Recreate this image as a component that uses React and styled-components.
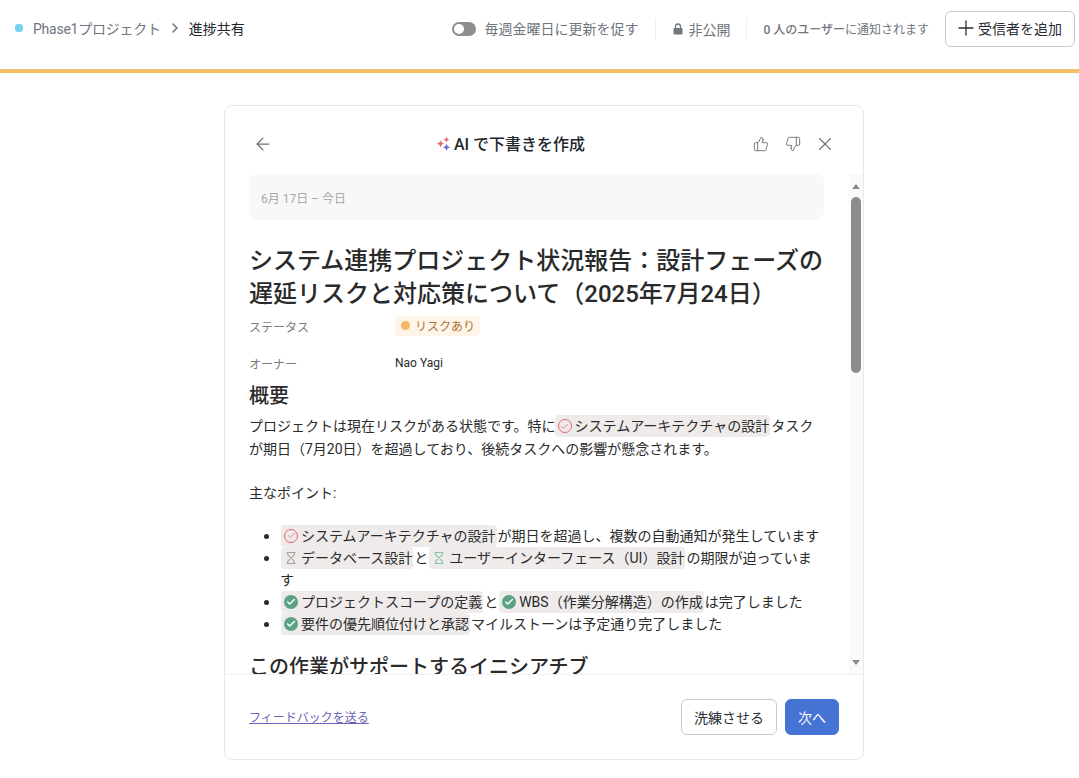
import React from "react";
import styled, { createGlobalStyle } from "styled-components";
import { ArrowLeft, ChevronRight, Plus, ThumbsDown, ThumbsUp, X, Check } from "lucide-react";

const GlobalStyle = createGlobalStyle`
  html, body {
    margin: 0;
    padding: 0;
    height: 100%;
    background: #fff;
    overflow: hidden;
    font-family: Roboto, "Noto Sans CJK JP", sans-serif;
    color: #2a2e34;
  }
  * { box-sizing: border-box; }
`;

const Page = styled.div`
  width: 1079px;
  height: 778px;
  display: flex;
  flex-direction: column;
`;

const TopBar = styled.header`
  height: 73px;
  flex: none;
  display: flex;
  align-items: center;
  justify-content: space-between;
  padding: 0 4px 12px 15px;
  border-bottom: 4px solid #f4bf69;
`;

const Crumbs = styled.div`
  display: flex;
  align-items: center;
  font-size: 14px;
  margin-top: -2px;
`;

const Dot = styled.span`
  width: 8px;
  height: 8px;
  border-radius: 3px;
  background: #76d6ee;
  margin-right: 10px;
`;

const CrumbLink = styled.span`
  color: #6f7680;
  letter-spacing: -0.25px;
`;

const CrumbCurrent = styled.span`
  color: #22262b;
  margin-left: 6px;
`;

const TopActions = styled.div`
  display: flex;
  align-items: center;
`;

const Toggle = styled.span`
  width: 24px;
  height: 14px;
  border-radius: 7px;
  background: #8f8d90;
  padding: 2px;
  margin-right: 8px;
  display: flex;
  &::before {
    content: "";
    width: 10px;
    height: 10px;
    border-radius: 50%;
    background: #fff;
  }
`;

const TopText = styled.span`
  font-size: 14px;
  color: #6f7680;
  margin-top: -2px;
`;

const Divider = styled.span`
  width: 1px;
  height: 22px;
  background: #eeeeee;
  margin: 0 ${(p) => p.$gap}px;
`;

const Privacy = styled.span`
  display: flex;
  align-items: center;
  gap: 5px;
  font-size: 14px;
  color: #6f7680;
`;

const NotifyText = styled.span`
  font-size: 12px;
  color: #6f7680;
  margin-right: 16px;
  b {
    font-weight: 500;
  }
`;

const AddButton = styled.button`
  height: 36px;
  width: 130px;
  border: 1px solid #c9c9c9;
  border-radius: 6px;
  background: #fff;
  font: inherit;
  font-size: 14px;
  color: #2a2e34;
  display: flex;
  align-items: center;
  justify-content: center;
  padding: 0 4px 2px 0;
`;

const Main = styled.main`
  flex: 1;
  display: flex;
  justify-content: center;
  padding: 32px 0 18px 9px;
  min-height: 0;
`;

const Card = styled.section`
  width: 640px;
  display: flex;
  flex-direction: column;
  border: 1px solid #e8e8e8;
  border-radius: 8px;
  background: #fff;
  overflow: hidden;
`;

const CardHead = styled.div`
  height: 68px;
  flex: none;
  display: flex;
  align-items: center;
  justify-content: space-between;
  padding: 8px 27px 0 28px;
`;

const IconBtn = styled.span`
  display: flex;
  color: #6c7077;
  margin-left: ${(p) => p.$shift || 0}px;
`;

const CardTitle = styled.h2`
  margin: -2px 0 0 -4px;
  display: flex;
  align-items: center;
  gap: 3px;
  font-size: 16px;
  font-weight: 500;
  color: #22262b;
`;

const HeadIcons = styled.div`
  display: flex;
  align-items: center;
  gap: 16px;
`;

const BodyWrap = styled.div`
  flex: 1;
  min-height: 0;
  display: flex;
  padding-left: 24px;
`;

const Scroller = styled.div`
  flex: 1;
  min-width: 0;
  overflow: hidden;
  padding-right: 25px;
`;

const DateBox = styled.div`
  height: 46px;
  background: #f8f8f8;
  border-radius: 8px;
  display: flex;
  align-items: center;
  padding-left: 12px;
  font-size: 12px;
  color: #a9a9a9;
`;

const Title = styled.h1`
  margin: 25px 0 4px;
  font-size: 24px;
  line-height: 33px;
  font-weight: 500;
  color: #2a2a2a;
`;

const MetaRow = styled.div`
  display: grid;
  grid-template-columns: 146px 1fr;
  align-items: center;
  height: 22px;
  margin-bottom: ${(p) => p.$after}px;
  font-size: 12px;
`;

const MetaLabel = styled.span`
  color: #7b7b7b;
`;

const MetaValue = styled.span`
  color: #2a2a2a;
`;

const Badge = styled.span`
  display: inline-flex;
  align-items: center;
  gap: 5px;
  height: 20px;
  width: 85px;
  padding-left: 6px;
  margin-top: -1px;
  border-radius: 4px;
  background: #fef5e8;
  color: #a87737;
  &::before {
    content: "";
    width: 9px;
    height: 9px;
    border-radius: 50%;
    background: #f4b968;
  }
`;

const Heading = styled.h3`
  margin: ${(p) => p.$top}px 0 ${(p) => p.$after}px;
  font-size: 20px;
  line-height: 27px;
  font-weight: 500;
  color: #2a2a2a;
`;

const Para = styled.p`
  margin: 0 0 ${(p) => p.$after}px;
  font-size: 14px;
  line-height: 22.5px;
  color: #2a2a2a;
`;

const List = styled.ul`
  margin: 0 0 19px;
  padding: 0 0 0 31px;
  font-size: 14px;
  line-height: 22px;
  color: #2a2a2a;
  li::marker {
    font-size: 15px;
  }
`;

const Chip = styled.span`
  display: inline-flex;
  align-items: center;
  height: 22px;
  padding: 0 1px 0 3px;
  margin: 0 1px 0 ${(p) => (p.$tight ? "-1px" : "1px")};
  border-radius: 4px;
  background: #eeebea;
  vertical-align: top;
  gap: 3px;
`;

const TaskDot = styled.span`
  width: 14px;
  height: 14px;
  flex: none;
  display: flex;
  align-items: center;
  justify-content: center;
  border-radius: 50%;
  color: ${(p) => (p.$kind === "late" ? "#e5636f" : "#fff")};
  border: ${(p) => (p.$kind === "late" ? "1px solid #e5636f" : "none")};
  background: ${(p) => (p.$kind === "done" ? "#5aa283" : "transparent")};
`;

const ScrollTrack = styled.div`
  width: 14px;
  flex: none;
  background: #fafafa;
  display: flex;
  flex-direction: column;
  align-items: center;
`;

const ScrollArrow = styled.span`
  width: 0;
  height: 0;
  flex: none;
  margin: ${(p) => (p.$up ? "10px 0 8px" : "auto 0 9px")};
  border-left: 4.5px solid transparent;
  border-right: 4.5px solid transparent;
  border-bottom: ${(p) => (p.$up ? "5px solid #8a8a8a" : "none")};
  border-top: ${(p) => (p.$up ? "none" : "5px solid #8a8a8a")};
`;

const ScrollThumb = styled.span`
  width: 10px;
  height: 176px;
  flex: none;
  border-radius: 5px;
  background: #8c8c8c;
`;

const CardFoot = styled.div`
  height: 85px;
  flex: none;
  border-top: 1px solid #f1f1f1;
  display: flex;
  align-items: center;
  justify-content: space-between;
  padding: 0 24px;
`;

const FeedbackLink = styled.a`
  font-size: 12px;
  color: #6e62b6;
  text-decoration: underline;
  margin-bottom: 2px;
`;

const FootButtons = styled.div`
  display: flex;
  gap: 8px;
`;

const FootButton = styled.button`
  height: 36px;
  width: ${(p) => (p.$primary ? "54px" : "96px")};
  border-radius: 6px;
  border: 1px solid ${(p) => (p.$primary ? "#4674d4" : "#c9c9c9")};
  background: ${(p) => (p.$primary ? "#4674d4" : "#fff")};
  color: ${(p) => (p.$primary ? "#fff" : "#2a2e34")};
  font: inherit;
  font-size: 14px;
  padding: 0;
`;

function Sparkle() {
  return (
    <svg width="14" height="15" viewBox="0 0 14 15">
      <path d="M3.500 4.200l1.100 2.400 2.400 1.100-2.400 1.100-1.100 2.400-1.100-2.400-2.400-1.100 2.400-1.100z" fill="#ee5f6c" />
      <path d="M9.500 .8l.9 2 2 .9-2 .9-.9 2-.9-2-2-.9 2-.9z" fill="#f0616c" />
      <path d="M9.500 7.800l1.100 2.400 2.400 1.100-2.400 1.100-1.100 2.400-1.100-2.400-2.400-1.100 2.400-1.100z" fill="#6a6fd6" />
    </svg>
  );
}

function LockIcon() {
  return (
    <svg width="10" height="12" viewBox="0 0 10 12">
      <path d="M2.500 5V3.500a2.500 2.500 0 0 1 5 0V5" fill="none" stroke="#6f7680" strokeWidth="1.300" />
      <rect x="0.500" y="5" width="9" height="6.500" rx="1" fill="#6f7680" />
    </svg>
  );
}

function Glass({ color }) {
  return (
    <svg width="14" height="14" viewBox="0 0 14 14" style={{ flex: "none" }}>
      <path
        d="M2.500 1.500h9M2.500 12.500h9M3.800 1.500v2.300L10.200 10.200v2.300M10.200 1.500v2.300L3.800 10.200v2.300"
        fill="none"
        stroke={color}
        strokeWidth="1.200"
      />
    </svg>
  );
}

function TaskChip({ kind, tight, children }) {
  let icon;
  if (kind === "todo") {
    icon = <Glass color="#a3a3a3" />;
  } else if (kind === "progress") {
    icon = <Glass color="#86c4ab" />;
  } else {
    icon = (
      <TaskDot $kind={kind}>
        <Check size={kind === "late" ? 9 : 10} strokeWidth={kind === "late" ? 2 : 3.5} />
      </TaskDot>
    );
  }
  return (
    <Chip $tight={tight}>
      {icon}
      {children}
    </Chip>
  );
}

export default function App() {
  return (
    <Page>
      <GlobalStyle />
      <TopBar>
        <Crumbs>
          <Dot />
          <CrumbLink>Phase1プロジェクト</CrumbLink>
          <ChevronRight size={16} strokeWidth={2.4} color="#6f7680" style={{ marginLeft: 6 }} />
          <CrumbCurrent>進捗共有</CrumbCurrent>
        </Crumbs>
        <TopActions>
          <Toggle />
          <TopText>毎週金曜日に更新を促す</TopText>
          <Divider $gap={17} />
          <Privacy>
            <LockIcon />
            非公開
          </Privacy>
          <Divider $gap={16} />
          <NotifyText>
            <b>0 人のユーザー</b>に通知されます
          </NotifyText>
          <AddButton>
            <Plus size={24} strokeWidth={1.3} />
            受信者を追加
          </AddButton>
        </TopActions>
      </TopBar>
      <Main>
        <Card>
          <CardHead>
            <IconBtn>
              <ArrowLeft size={20} strokeWidth={1.5} />
            </IconBtn>
            <CardTitle>
              <Sparkle />
              AI で下書きを作成
            </CardTitle>
            <HeadIcons>
              <IconBtn>
                <ThumbsUp size={16} strokeWidth={1.4} />
              </IconBtn>
              <IconBtn>
                <ThumbsDown size={16} strokeWidth={1.4} />
              </IconBtn>
              <IconBtn $shift={-3}>
                <X size={22} strokeWidth={1.2} />
              </IconBtn>
            </HeadIcons>
          </CardHead>
          <BodyWrap>
            <Scroller>
              <DateBox>6月 17日 – 今日</DateBox>
              <Title>システム連携プロジェクト状況報告：設計フェーズの遅延リスクと対応策について（2025年7月24日）</Title>
              <MetaRow $after={15}>
                <MetaLabel>ステータス</MetaLabel>
                <span>
                  <Badge>リスクあり</Badge>
                </span>
              </MetaRow>
              <MetaRow $after={0}>
                <MetaLabel>オーナー</MetaLabel>
                <MetaValue>Nao Yagi</MetaValue>
              </MetaRow>
              <Heading $top={9} $after={5}>概要</Heading>
              <Para $after={22}>
                プロジェクトは現在リスクがある状態です。特に
                <TaskChip kind="late" tight>システムアーキテクチャの設計</TaskChip>
                タスクが期日（7月20日）を超過しており、後続タスクへの影響が懸念されます。
              </Para>
              <Para $after={20}>主なポイント:</Para>
              <List>
                <li>
                  <TaskChip kind="late">システムアーキテクチャの設計</TaskChip>が期日を超過し、複数の自動通知が発生しています
                </li>
                <li>
                  <TaskChip kind="todo">データベース設計</TaskChip>と<TaskChip kind="progress">ユーザーインターフェース（UI）設計</TaskChip>の期限が迫っています
                </li>
                <li>
                  <TaskChip kind="done">プロジェクトスコープの定義</TaskChip>と<TaskChip kind="done">WBS（作業分解構造）の作成</TaskChip>は完了しました
                </li>
                <li>
                  <TaskChip kind="done">要件の優先順位付けと承認</TaskChip>マイルストーンは予定通り完了しました
                </li>
              </List>
              <Heading $top={0} $after={8}>この作業がサポートするイニシアチブ</Heading>
            </Scroller>
            <ScrollTrack>
              <ScrollArrow $up />
              <ScrollThumb />
              <ScrollArrow />
            </ScrollTrack>
          </BodyWrap>
          <CardFoot>
            <FeedbackLink>フィードバックを送る</FeedbackLink>
            <FootButtons>
              <FootButton>洗練させる</FootButton>
              <FootButton $primary>次へ</FootButton>
            </FootButtons>
          </CardFoot>
        </Card>
      </Main>
    </Page>
  );
}
